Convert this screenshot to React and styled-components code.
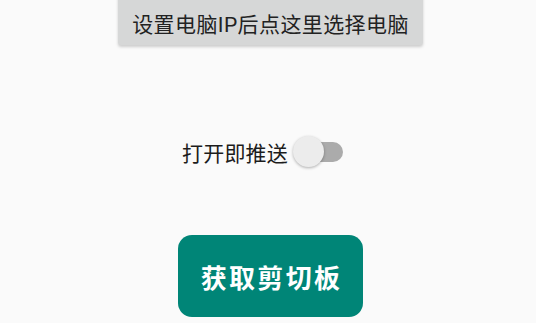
import React, { useState } from "react";
import styled, { createGlobalStyle } from "styled-components";

const Global = createGlobalStyle`
  html, body { margin: 0; padding: 0; background: #fafafa; }
  body { font-family: Roboto, "Noto Sans CJK SC", sans-serif; overflow: hidden; }
`;

const Page = styled.div`
  width: 536px;
  height: 323px;
  box-sizing: border-box;
  padding-left: 5px;
  display: flex;
  flex-direction: column;
  align-items: center;
`;

const TopButton = styled.button`
  margin-top: -6px;
  width: 305px;
  height: 51px;
  border: none;
  border-radius: 3px;
  background: #d6d7d7;
  box-shadow: 0 2px 3px rgba(0, 0, 0, 0.18);
  color: #222;
  font-family: Roboto, "Noto Sans CJK SC", sans-serif;
  font-size: 21px;
  letter-spacing: 0.4px;
  padding: 6px 0 0 0;
  display: flex;
  align-items: center;
  justify-content: center;
`;

const Row = styled.div`
  margin-top: 91px;
  margin-left: -16px;
  display: flex;
  align-items: center;
  gap: 5px;
`;

const Label = styled.span`
  font-size: 21px;
  letter-spacing: 0.2px;
  color: #1c1c1c;
  font-family: Roboto, "Noto Sans CJK SC", sans-serif;
`;

const Switch = styled.div`
  position: relative;
  width: 50px;
  height: 32px;
  display: flex;
  align-items: center;
`;

const Track = styled.div`
  margin-left: 6px;
  width: 44px;
  height: 20px;
  border-radius: 10px;
  background: #ababab;
`;

const Thumb = styled.div`
  position: absolute;
  left: 0;
  top: 0;
  width: 31px;
  height: 31px;
  border-radius: 50%;
  background: #ececec;
  box-shadow: 0 1px 3px rgba(0, 0, 0, 0.3);
`;

const MainButton = styled.button`
  margin-top: 67px;
  width: 185px;
  height: 82px;
  border: none;
  border-radius: 14px;
  background: #008577;
  color: #fff;
  font-family: Roboto, "Noto Sans CJK SC", sans-serif;
  font-size: 26px;
  font-weight: 700;
  letter-spacing: 2.3px;
  padding: 0 0 0 2px;
  display: flex;
  align-items: center;
  justify-content: center;
`;

export default function App() {
  const [on] = useState(false);
  return (
    <>
      <Global />
      <Page>
        <TopButton>设置电脑IP后点这里选择电脑</TopButton>
        <Row>
          <Label>打开即推送</Label>
          <Switch data-on={on}>
            <Track />
            <Thumb />
          </Switch>
        </Row>
        <MainButton>获取剪切板</MainButton>
      </Page>
    </>
  );
}
